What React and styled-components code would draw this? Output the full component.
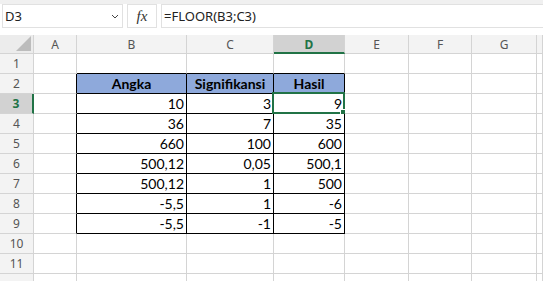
import styled, { createGlobalStyle } from "styled-components";

const GlobalStyle = createGlobalStyle`
  body {
    margin: 0;
    background: #ffffff;
    font-family: "Noto Sans", sans-serif;
    overflow: hidden;
  }
`;

const Sheet = styled.div`
  width: 543px;
  height: 281px;
  overflow: hidden;
  background: #ffffff;
`;

const FormulaBar = styled.div`
  height: 35px;
  box-sizing: border-box;
  border-top: 4px solid #f0f0f0;
  padding: 0 0 7px 2px;
  display: flex;
  align-items: stretch;
  gap: 4px;
  background: #ffffff;
`;

const NameBox = styled.div`
  width: 121px;
  box-sizing: border-box;
  border: 1px solid #e1e1e1;
  display: flex;
  align-items: center;
  justify-content: space-between;
  padding: 0 3px 0 2px;
  font-size: 13px;
  color: #222;
`;

const FxBox = styled.div`
  width: 30px;
  box-sizing: border-box;
  border: 1px solid #e1e1e1;
  display: flex;
  align-items: center;
  justify-content: center;
  font-family: "Liberation Serif", serif;
  font-style: italic;
  font-size: 15px;
  color: #333;
`;

const FormulaInput = styled.div`
  flex: 1;
  box-sizing: border-box;
  border: 1px solid #e1e1e1;
  border-right: none;
  display: flex;
  align-items: center;
  padding-left: 2px;
  font-size: 13px;
  color: #222;
`;

const Grid = styled.div`
  display: grid;
  grid-template-columns: 34px 43px 110px 87px 71px 64px 63px 65px 1fr;
  grid-template-rows: 19px repeat(12, 20px);
`;

const Corner = styled.div`
  background: #ececec;
  border-right: 1px solid #d4d4d4;
  border-bottom: 1px solid #d4d4d4;
  position: relative;
  &::after {
    content: "";
    position: absolute;
    right: 2px;
    bottom: 2px;
    width: 0;
    height: 0;
    border-left: 15px solid transparent;
    border-bottom: 15px solid #bcbcbc;
  }
`;

const ColHead = styled.div`
  box-sizing: border-box;
  background: ${(p) => (p.$active ? "#d2d2d2" : "#f3f3f3")};
  border-right: 1px solid #d4d4d4;
  border-bottom: ${(p) => (p.$active ? "2px solid #217346" : "1px solid #d4d4d4")};
  display: flex;
  align-items: center;
  justify-content: center;
  font-size: 12px;
  font-weight: ${(p) => (p.$active ? 700 : 400)};
  color: ${(p) => (p.$active ? "#217346" : "#555")};
  padding-top: ${(p) => (p.$active ? "1px" : "0")};
`;

const RowHead = styled.div`
  box-sizing: border-box;
  background: ${(p) => (p.$active ? "#d2d2d2" : "#f3f3f3")};
  border-right: ${(p) => (p.$active ? "2px solid #217346" : "1px solid #d4d4d4")};
  border-bottom: 1px solid #d4d4d4;
  display: flex;
  align-items: center;
  justify-content: center;
  font-size: 12px;
  font-weight: ${(p) => (p.$active ? 700 : 400)};
  color: ${(p) => (p.$active ? "#217346" : "#555")};
`;

const Cell = styled.div`
  box-sizing: border-box;
  position: relative;
  border-right: 1px solid ${(p) => (p.$edgeRight ? "#000" : "#d4d4d4")};
  border-bottom: 1px solid ${(p) => (p.$edgeBottom ? "#000" : "#d4d4d4")};
  background: ${(p) => (p.$head ? "#8ea9db" : "#fff")};
  display: flex;
  align-items: center;
  justify-content: ${(p) => (p.$head ? "center" : "flex-end")};
  padding: 0 2px;
  font-family: Lato, "Liberation Sans", sans-serif;
  font-size: 14px;
  font-weight: ${(p) => (p.$head ? 700 : 400)};
  color: #000;
  white-space: nowrap;
`;

const Selection = styled.div`
  position: absolute;
  left: -2px;
  top: -2px;
  right: -1px;
  bottom: -1px;
  border: 2px solid #217346;
  pointer-events: none;
  &::after {
    content: "";
    position: absolute;
    right: -4px;
    bottom: -4px;
    width: 5px;
    height: 5px;
    background: #217346;
    border: 1px solid #fff;
  }
`;

const Chevron = () => (
  <svg width="8" height="5" viewBox="0 0 8 5">
    <path d="M1 1 L4 4 L7 1" fill="none" stroke="#444" strokeWidth="1" />
  </svg>
);

const columns = ["A", "B", "C", "D", "E", "F", "G", ""];

const data = [
  ["10", "3", "9"],
  ["36", "7", "35"],
  ["660", "100", "600"],
  ["500,12", "0,05", "500,1"],
  ["500,12", "1", "500"],
  ["-5,5", "1", "-6"],
  ["-5,5", "-1", "-5"],
];

const headers = ["Angka", "Signifikansi", "Hasil"];

// the 12th row only peeks in at the bottom edge, its number is out of view
const VISIBLE_LABELS = 11;

export default function App() {
  const rows = [];
  for (let r = 1; r <= 12; r++) {
    const inTable = r >= 2 && r <= 9;
    rows.push(
      <RowHead key={`h${r}`} $active={r === 3}>
        {r <= VISIBLE_LABELS ? r : ""}
      </RowHead>
    );
    columns.forEach((col, ci) => {
      const tableCol = ci >= 1 && ci <= 3;
      let text = "";
      if (inTable && tableCol) {
        text = r === 2 ? headers[ci - 1] : data[r - 3][ci - 1];
      }
      const edgeRight = inTable && ci <= 3;
      const edgeBottom = tableCol && r <= 9;
      rows.push(
        <Cell
          key={`${r}-${ci}`}
          $edgeRight={edgeRight}
          $edgeBottom={edgeBottom}
          $head={r === 2 && tableCol}
        >
          {text}
          {r === 3 && col === "D" && <Selection />}
        </Cell>
      );
    });
  }

  return (
    <Sheet>
      <GlobalStyle />
      <FormulaBar>
        <NameBox>
          <span>D3</span>
          <Chevron />
        </NameBox>
        <FxBox>fx</FxBox>
        <FormulaInput>=FLOOR(B3;C3)</FormulaInput>
      </FormulaBar>
      <Grid>
        <Corner />
        {columns.map((c, i) => (
          <ColHead key={i} $active={c === "D"}>
            {c}
          </ColHead>
        ))}
        {rows}
      </Grid>
    </Sheet>
  );
}
